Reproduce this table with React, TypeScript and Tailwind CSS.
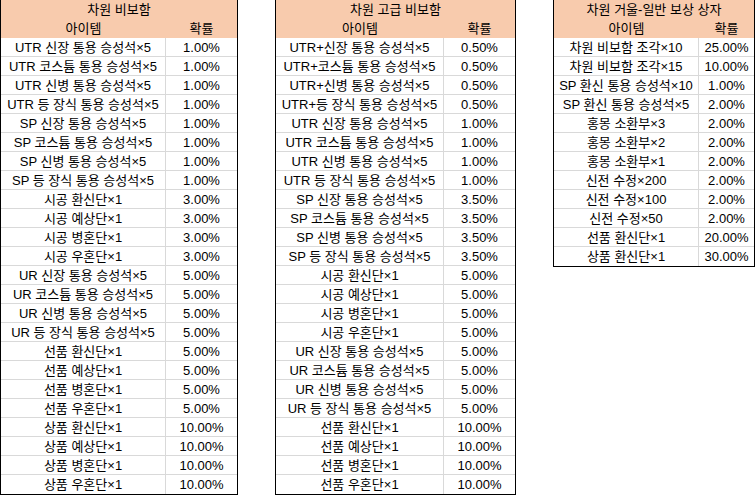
type Row = [string, string];

const boxA: Row[] = [
  ["UTR 신장 통용 승성석×5", "1.00%"],
  ["UTR 코스튬 통용 승성석×5", "1.00%"],
  ["UTR 신병 통용 승성석×5", "1.00%"],
  ["UTR 등 장식 통용 승성석×5", "1.00%"],
  ["SP 신장 통용 승성석×5", "1.00%"],
  ["SP 코스튬 통용 승성석×5", "1.00%"],
  ["SP 신병 통용 승성석×5", "1.00%"],
  ["SP 등 장식 통용 승성석×5", "1.00%"],
  ["시공 환신단×1", "3.00%"],
  ["시공 예상단×1", "3.00%"],
  ["시공 병혼단×1", "3.00%"],
  ["시공 우혼단×1", "3.00%"],
  ["UR 신장 통용 승성석×5", "5.00%"],
  ["UR 코스튬 통용 승성석×5", "5.00%"],
  ["UR 신병 통용 승성석×5", "5.00%"],
  ["UR 등 장식 통용 승성석×5", "5.00%"],
  ["선품 환신단×1", "5.00%"],
  ["선품 예상단×1", "5.00%"],
  ["선품 병혼단×1", "5.00%"],
  ["선품 우혼단×1", "5.00%"],
  ["상품 환신단×1", "10.00%"],
  ["상품 예상단×1", "10.00%"],
  ["상품 병혼단×1", "10.00%"],
  ["상품 우혼단×1", "10.00%"],
];

const boxB: Row[] = [
  ["UTR+신장 통용 승성석×5", "0.50%"],
  ["UTR+코스튬 통용 승성석×5", "0.50%"],
  ["UTR+신병 통용 승성석×5", "0.50%"],
  ["UTR+등 장식 통용 승성석×5", "0.50%"],
  ["UTR 신장 통용 승성석×5", "1.00%"],
  ["UTR 코스튬 통용 승성석×5", "1.00%"],
  ["UTR 신병 통용 승성석×5", "1.00%"],
  ["UTR 등 장식 통용 승성석×5", "1.00%"],
  ["SP 신장 통용 승성석×5", "3.50%"],
  ["SP 코스튬 통용 승성석×5", "3.50%"],
  ["SP 신병 통용 승성석×5", "3.50%"],
  ["SP 등 장식 통용 승성석×5", "3.50%"],
  ["시공 환신단×1", "5.00%"],
  ["시공 예상단×1", "5.00%"],
  ["시공 병혼단×1", "5.00%"],
  ["시공 우혼단×1", "5.00%"],
  ["UR 신장 통용 승성석×5", "5.00%"],
  ["UR 코스튬 통용 승성석×5", "5.00%"],
  ["UR 신병 통용 승성석×5", "5.00%"],
  ["UR 등 장식 통용 승성석×5", "5.00%"],
  ["선품 환신단×1", "10.00%"],
  ["선품 예상단×1", "10.00%"],
  ["선품 병혼단×1", "10.00%"],
  ["선품 우혼단×1", "10.00%"],
];

const boxC: Row[] = [
  ["차원 비보함 조각×10", "25.00%"],
  ["차원 비보함 조각×15", "10.00%"],
  ["SP 환신 통용 승성석×10", "1.00%"],
  ["SP 환신 통용 승성석×5", "2.00%"],
  ["홍몽 소환부×3", "2.00%"],
  ["홍몽 소환부×2", "2.00%"],
  ["홍몽 소환부×1", "2.00%"],
  ["신전 수정×200", "2.00%"],
  ["신전 수정×100", "2.00%"],
  ["신전 수정×50", "2.00%"],
  ["선품 환신단×1", "20.00%"],
  ["상품 환신단×1", "30.00%"],
];

function RateTable({
  title,
  rows,
  width,
  col1,
}: {
  title: string;
  rows: Row[];
  width: string;
  col1: string;
}) {
  return (
    <div className={`${width} shrink-0 border-x border-b border-black bg-white`}>
      <div className="bg-[#f8cbad]">
        <div className="flex h-[19px] items-center justify-center leading-none">{title}</div>
        <div className="flex h-[19px] items-center leading-none">
          <div className={`${col1} shrink-0 text-center`}>아이템</div>
          <div className="flex-1 text-center">확률</div>
        </div>
      </div>
      {rows.map(([item, rate], i) => (
        <div
          key={i}
          className={`flex h-[19px] leading-none ${i < rows.length - 1 ? "border-b border-[#d9d9d9]" : ""}`}
        >
          <div className={`${col1} flex shrink-0 items-center justify-center border-r border-[#d9d9d9]`}>
            {item}
          </div>
          <div className="flex flex-1 items-center justify-center">{rate}</div>
        </div>
      ))}
    </div>
  );
}

export default function App() {
  return (
    <div
      className="flex h-[495px] w-[755px] items-start gap-[37px] overflow-hidden bg-white text-[13px] text-black"
      style={{ fontFamily: '"Liberation Sans", "Noto Sans CJK KR", sans-serif' }}
    >
      <RateTable title="차원 비보함" rows={boxA} width="w-[238px]" col1="w-[165px]" />
      <RateTable title="차원 고급 비보함" rows={boxB} width="w-[241px]" col1="w-[168px]" />
      <RateTable title="차원 거울-일반 보상 상자" rows={boxC} width="w-[202px]" col1="w-[145px]" />
    </div>
  );
}
